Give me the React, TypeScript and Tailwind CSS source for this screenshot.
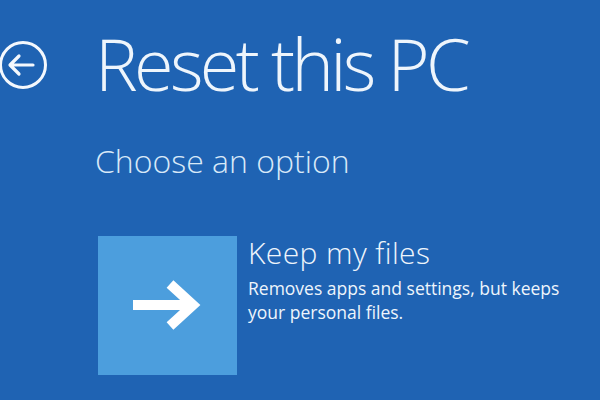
export default function App() {
  return (
    <div className="w-[600px] h-[400px] overflow-hidden bg-[#1f63b3] text-[#eef5fc] font-['Open_Sans',sans-serif]">
      <div className="flex items-start pt-[27px]">
        <svg width="48" height="50" viewBox="0 0 48 50" className="mt-[13px] -ml-[1px]" fill="none" stroke="#f4f8fd">
          <circle cx="24" cy="25" r="22.5" strokeWidth="3" />
          <path d="M34 25H12M20 16l-9 9 9 9" strokeWidth="3.2" strokeLinecap="round" strokeLinejoin="round" />
        </svg>
        <h1 className="ml-[48px] text-[72px] leading-none font-light tracking-[-3.7px]">Reset this PC</h1>
      </div>
      <div className="pl-[95px]">
        <h2 className="mt-[46px] text-[32px] leading-none font-light text-[#d8e9f8]">Choose an option</h2>
        <div className="mt-[59px] flex items-start">
          <div className="ml-[3px] w-[139px] h-[139px] bg-[#4c9edd]">
            <svg width="139" height="139" viewBox="0 0 139 139" fill="none" stroke="#ffffff">
              <path d="M35 69H96M72 48L95 69L72 90" strokeWidth="10" strokeLinejoin="miter" />
            </svg>
          </div>
          <div className="ml-[11px] mt-0">
            <div className="text-[30px] leading-[34px] font-light tracking-[0.4px]">Keep my files</div>
            <p className="mt-[6px] w-[325px] text-[17.5px] leading-[24px]">
              Removes apps and settings, but keeps your personal files.
            </p>
          </div>
        </div>
      </div>
    </div>
  );
}
